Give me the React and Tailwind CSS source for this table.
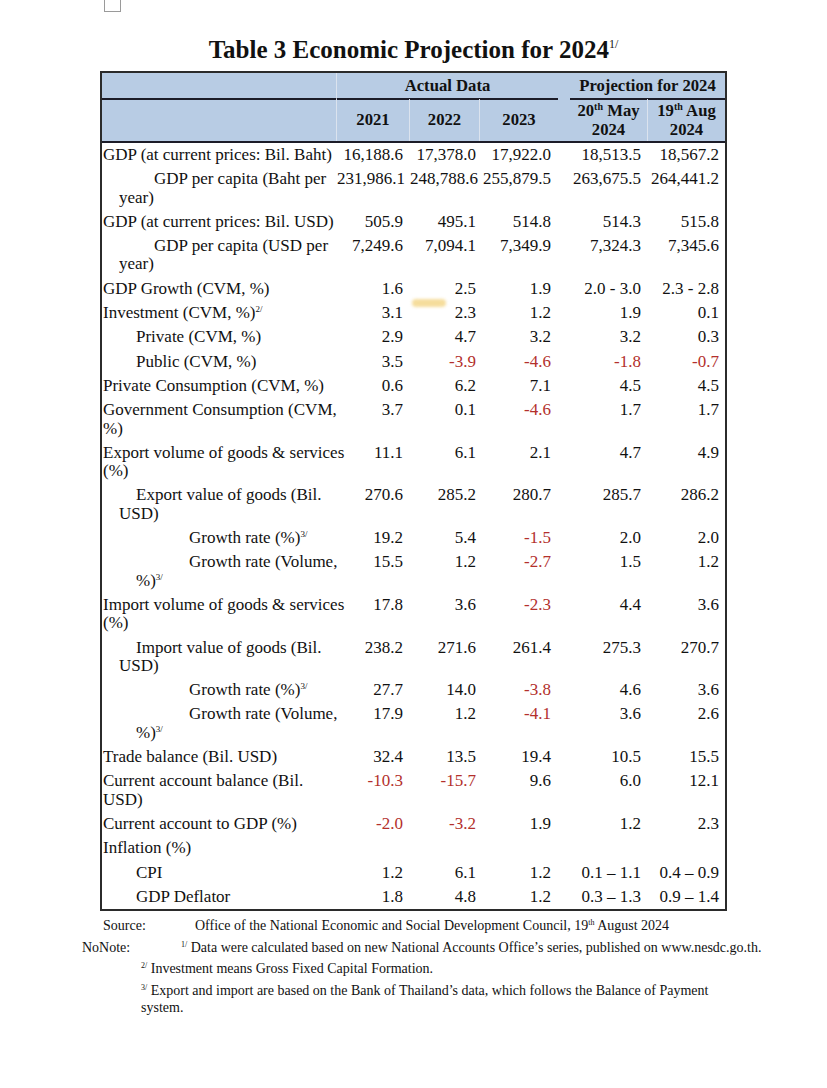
import React from 'react';

// Tabla de proyección económica (estilo documento impreso)
const SERIF = "font-['Liberation_Serif','Times_New_Roman',serif]";
const COLS = 'grid grid-cols-[235px_73px_70px_78px_12px_78px_77px]';

// Sangrías de las etiquetas (px desde el borde interior)
const IND = {
  0: 'pl-[1px]',
  16: 'pl-[17px]',
  33: 'pl-[34px]',
  51: 'pl-[52px]',
  86: 'pl-[87px]',
};

// Padding derecho de cada columna numérica
const PR = ['pr-[7px]', 'pr-[4px]', 'pr-[7px]', 'pr-[7px]', 'pr-[6px]'];

const filas = [
  { l: [[0, 'GDP (at current prices: Bil. Baht)']], v: ['16,188.6', '17,378.0', '17,922.0', '18,513.5', '18,567.2'] },
  { l: [[51, 'GDP per capita (Baht per'], [16, 'year)']], v: ['231,986.1', '248,788.6', '255,879.5', '263,675.5', '264,441.2'] },
  { l: [[0, 'GDP (at current prices: Bil. USD)']], v: ['505.9', '495.1', '514.8', '514.3', '515.8'] },
  { l: [[51, 'GDP per capita (USD per'], [16, 'year)']], v: ['7,249.6', '7,094.1', '7,349.9', '7,324.3', '7,345.6'] },
  { l: [[0, 'GDP Growth (CVM, %)']], v: ['1.6', '2.5', '1.9', '2.0 - 3.0', '2.3 - 2.8'] },
  { l: [[0, 'Investment (CVM, %)', '2/']], v: ['3.1', '2.3', '1.2', '1.9', '0.1'] },
  { l: [[33, 'Private (CVM, %)']], v: ['2.9', '4.7', '3.2', '3.2', '0.3'] },
  { l: [[33, 'Public (CVM, %)']], v: ['3.5', '-3.9', '-4.6', '-1.8', '-0.7'] },
  { l: [[0, 'Private Consumption (CVM, %)']], v: ['0.6', '6.2', '7.1', '4.5', '4.5'] },
  { l: [[0, 'Government Consumption (CVM,'], [0, '%)']], v: ['3.7', '0.1', '-4.6', '1.7', '1.7'] },
  { l: [[0, 'Export volume of goods & services'], [0, '(%)']], v: ['11.1', '6.1', '2.1', '4.7', '4.9'] },
  { l: [[33, 'Export value of goods (Bil.'], [16, 'USD)']], v: ['270.6', '285.2', '280.7', '285.7', '286.2'] },
  { l: [[86, 'Growth rate (%)', '3/']], v: ['19.2', '5.4', '-1.5', '2.0', '2.0'] },
  { l: [[86, 'Growth rate (Volume,'], [33, '%)', '3/']], v: ['15.5', '1.2', '-2.7', '1.5', '1.2'] },
  { l: [[0, 'Import volume of goods & services'], [0, '(%)']], v: ['17.8', '3.6', '-2.3', '4.4', '3.6'] },
  { l: [[33, 'Import value of goods (Bil.'], [16, 'USD)']], v: ['238.2', '271.6', '261.4', '275.3', '270.7'] },
  { l: [[86, 'Growth rate (%)', '3/']], v: ['27.7', '14.0', '-3.8', '4.6', '3.6'] },
  { l: [[86, 'Growth rate (Volume,'], [33, '%)', '3/']], v: ['17.9', '1.2', '-4.1', '3.6', '2.6'] },
  { l: [[0, 'Trade balance (Bil. USD)']], v: ['32.4', '13.5', '19.4', '10.5', '15.5'] },
  { l: [[0, 'Current account balance (Bil.'], [0, 'USD)']], v: ['-10.3', '-15.7', '9.6', '6.0', '12.1'] },
  { l: [[0, 'Current account to GDP (%)']], v: ['-2.0', '-3.2', '1.9', '1.2', '2.3'] },
  { l: [[0, 'Inflation (%)']], v: ['', '', '', '', ''] },
  { l: [[33, 'CPI']], v: ['1.2', '6.1', '1.2', '0.1 – 1.1', '0.4 – 0.9'] },
  { l: [[33, 'GDP Deflator']], v: ['1.8', '4.8', '1.2', '0.3 – 1.3', '0.9 – 1.4'] },
];

function Sup({ children, className = 'text-[9px] -top-[6px]' }) {
  return <span className={`relative leading-none ${className}`}>{children}</span>;
}

function Fila({ fila }) {
  const celdas = fila.v.map((val, i) => {
    const rojo = val.startsWith('-') && !val.includes(' ');
    return (
      <div key={i} className={`py-[3px] leading-[18.3px] text-right whitespace-nowrap ${PR[i]} ${rojo ? 'text-[#b3302c]' : ''}`}>
        {val}
      </div>
    );
  });
  return (
    <div className={COLS}>
      <div className="py-[3px] leading-[18.3px]">
        {fila.l.map(([ind, txt, sup], k) => (
          <div key={k} className={`whitespace-nowrap ${IND[ind]}`}>
            {txt}
            {sup && <Sup>{sup}</Sup>}
          </div>
        ))}
      </div>
      {celdas.slice(0, 3)}
      <div />
      {celdas.slice(3)}
    </div>
  );
}

export default function App() {
  return (
    <div className={`w-[827px] min-h-[1088px] bg-white text-[#111] text-[17px] ${SERIF}`}>
      {/* casilla recortada arriba */}
      <div className="ml-[104px] h-[12px] w-[17px] border-x border-b border-[#9a9a9a]" />

      <h1 className="mt-[24px] ml-[100px] w-[627px] text-center text-[25px] leading-[28px] font-bold">
        Table 3 Economic Projection for 2024
        <Sup className="text-[12px] -top-[10px] font-normal">1/</Sup>
      </h1>

      <div className="relative mt-[7px] ml-[100px] w-[627px] border-2 border-[#2b2b2b]">
        {/* Encabezado */}
        <div className="bg-[#b8cce4] font-bold text-[16.7px]">
          <div className={`${COLS} h-[26px]`}>
            <div className="border-b-2 border-r border-b-[#1c1c28] border-r-[#dbe3ee]" />
            <div className="col-span-3 flex items-center justify-center border-b-2 border-b-[#1c1c28]">Actual Data</div>
            <div />
            <div className="col-span-2 flex items-center justify-center border-b-2 border-b-[#1c1c28]">Projection for 2024</div>
          </div>
          <div className={`${COLS} h-[44px] border-b-2 border-b-[#1c1c28]`}>
            <div className="border-r border-r-[#dbe3ee]" />
            <div className="flex items-center justify-center border-r border-r-[#dbe3ee]">2021</div>
            <div className="flex items-center justify-center border-r border-r-[#dbe3ee]">2022</div>
            <div className="flex items-center justify-center">2023</div>
            <div />
            <div className="flex flex-col items-center justify-center leading-[19px] border-r border-r-[#dbe3ee]">
              <span>20<Sup className="text-[10px] -top-[6px]">th</Sup> May</span>
              <span>2024</span>
            </div>
            <div className="flex flex-col items-center justify-center leading-[19px]">
              <span>19<Sup className="text-[10px] -top-[6px]">th</Sup> Aug</span>
              <span>2024</span>
            </div>
          </div>
        </div>

        {/* Cuerpo */}
        <div>
          {filas.map((f, i) => (
            <Fila key={i} fila={f} />
          ))}
        </div>

        {/* mancha de resaltador */}
        <div className="absolute left-[310px] top-[226px] h-[8px] w-[34px] rounded-full bg-[#f2cf73] opacity-70 blur-[1.5px]" />
      </div>

      {/* Fuente y notas */}
      <div className="text-[14px] leading-[17px]">
        <div className="mt-[6px] flex whitespace-nowrap">
          <span className="ml-[103px] w-[92px]">Source:</span>
          <span>
            Office of the National Economic and Social Development Council, 19<Sup className="text-[8px] -top-[5px]">th</Sup> August 2024
          </span>
        </div>
        <div className="mt-[5px] flex whitespace-nowrap">
          <span className="ml-[82px] w-[99px]">NoNote:</span>
          <span>
            <Sup className="text-[8px] -top-[5px]">1/</Sup> Data were calculated based on new National Accounts Office’s series, published on www.nesdc.go.th.
          </span>
        </div>
        <div className="mt-[4px] ml-[141px] whitespace-nowrap">
          <Sup className="text-[8px] -top-[5px]">2/</Sup> Investment means Gross Fixed Capital Formation.
        </div>
        <div className="mt-[5px] ml-[141px] whitespace-nowrap">
          <Sup className="text-[8px] -top-[5px]">3/</Sup> Export and import are based on the Bank of Thailand’s data, which follows the Balance of Payment
          <br />
          system.
        </div>
      </div>
    </div>
  );
}
